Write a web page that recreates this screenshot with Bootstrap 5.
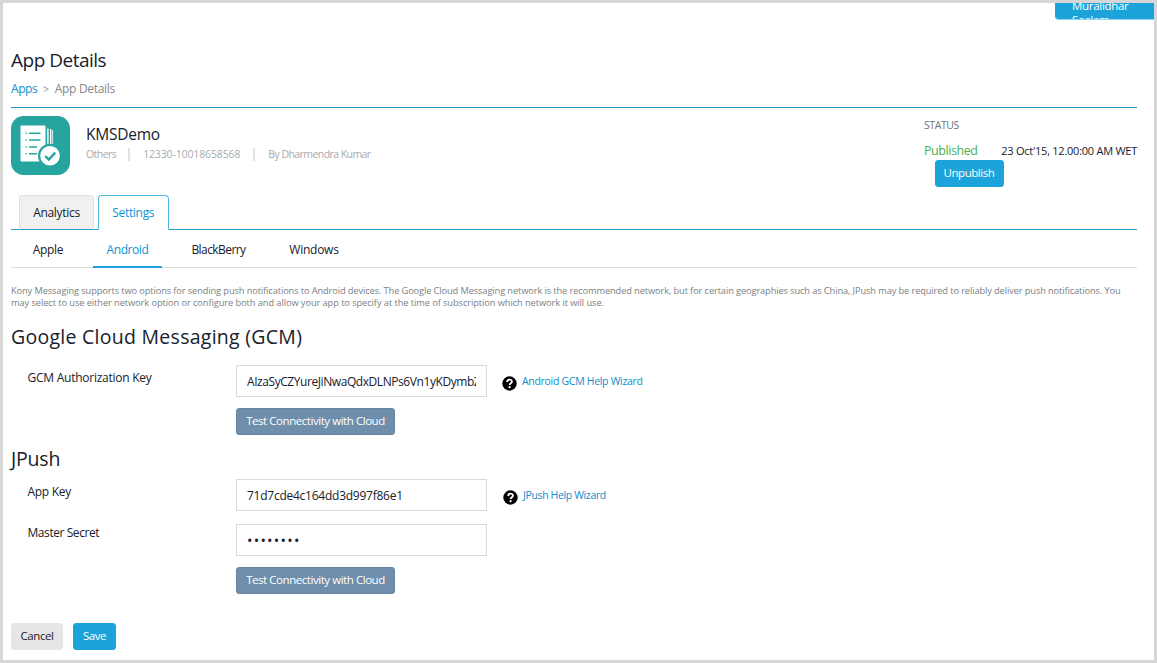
<!DOCTYPE html>
<html lang="en">
<head>
<meta charset="utf-8">
<meta name="viewport" content="width=device-width, initial-scale=1">
<title>App Details</title>
<link href="https://cdn.jsdelivr.net/npm/bootstrap@5.3.0/dist/css/bootstrap.min.css" rel="stylesheet">
<style>
  body { font: 12px/20px "Open Sans", "Noto Sans", sans-serif; color: #17212b; letter-spacing: -.3px; background: #fff; }
  a { color: #0d8ec9; text-decoration: none; }
  .page-frame { height: 663px; border: 3px solid #d6d6d6; padding: 43px 17px 0 8px; }
  .ls-1 { letter-spacing: -.13px; } .ls-2 { letter-spacing: -.25px; } .ls-4 { letter-spacing: -.43px; } .ls-5 { letter-spacing: -.57px; }
  .user-menu { width: 99px; height: 17px; padding: 0 28px 0 17px; background: #1ba3da; border-bottom: 1px solid #8fd3ee; border-bottom-left-radius: 4px; color: #fff; font-size: 11.5px; line-height: 14px; }
  .user-menu span { display: block; margin-top: -4px; }
  h1 { font-size: 19px; line-height: 29px; letter-spacing: -.5px; font-weight: 400; }
  h2 { font-size: 19.5px; line-height: 28px; letter-spacing: .27px; font-weight: 400; }
  .crumbs { height: 33px; padding-top: 4px; color: #85888b; border-bottom: 1px solid #2196bd; }
  .crumbs .sep { font-size: 10px; margin: 0 6px; }
  .app-head { height: 87px; padding-top: 8px; }
  .app-name { font-size: 15.5px; line-height: 20px; letter-spacing: -.23px; margin-top: 8px; }
  .meta { font-size: 10.5px; line-height: 20px; color: #a9abad; }
  .meta .bar { width: 2px; height: 13px; background: #dfe4e8; }
  .status { width: 213px; }
  .status .label-top { font-size: 10.5px; line-height: 18px; color: #6f7477; }
  .published { font-size: 12.5px; color: #4ab04e; }
  .date { font-size: 11px; }
  .btn { --bs-btn-font-size: 11.5px; --bs-btn-line-height: 23px; --bs-btn-padding-x: 0; --bs-btn-padding-y: 0; --bs-btn-border-radius: 3px; height: 27px; padding-bottom: 2px; display: block; letter-spacing: -.45px; }
  .btn-sky { --bs-btn-bg: #1ba3da; --bs-btn-border-color: #1ba3da; --bs-btn-color: #fff; }
  .btn-slate { --bs-btn-bg: #6f8eab; --bs-btn-border-color: #6887a5; --bs-btn-color: #fff; width: 159px; }
  .btn-grey { --bs-btn-bg: #e6e6e6; --bs-btn-border-color: #e6e6e6; --bs-btn-color: #17212b; }
  .main-tabs { height: 35px; border-bottom: 1px solid #2b9fca; padding-left: 8px; gap: 4px; }
  .main-tabs .nav-link { height: 35px; padding: 7px 0 0; margin: 0; text-align: center; color: #17212b; background: #f0f0f0; border: 1px solid #e0e0e0; border-bottom-color: #2b9fca; border-radius: 4px 4px 0 0; }
  .main-tabs .nav-link.active { color: #0d93d2; background: #fff; border-color: #4fb8df; border-bottom-color: #fff; }
  .sub-tabs { height: 38px; border-bottom: 1px solid #dedede; }
  .sub-tabs .nav-link { height: 38px; padding: 10px 0 0; color: #17212b; text-align: center; }
  .sub-tabs .nav-link.active { color: #0d93d2; border-bottom: 2px solid #1ba3da; }
  .intro { font-size: 9.25px; line-height: 12px; letter-spacing: -.103px; color: #7a7f83; padding-top: 17px; }
  .field-label { width: 225px; padding-left: 16.5px; }
  .form-control { width: 251px; height: 32px; padding: 0 10px; font-size: 12px; line-height: 20px; border: 1px solid #d3dbe2; border-radius: 0; color: #17212b; }
  .field-help { font-size: 10.5px; margin-left: 15px; height: 32px; }
  .push-btn { margin-left: 225px; }
</style>
</head>
<body>
<div class="page-frame position-relative overflow-hidden">
  <div class="user-menu position-absolute top-0 end-0 overflow-hidden"><span>Muralidhar Seelam</span></div>

  <h1 class="m-0">App Details</h1>
  <div class="crumbs d-flex"><a href="#" class="ls-4">Apps</a><span class="sep">&gt;</span><span>App Details</span></div>

  <div class="app-head d-flex">
    <svg width="59" height="59" viewBox="0 0 59 59" class="flex-shrink-0">
      <rect width="59" height="59" rx="12.5" fill="#26a5a0"/>
      <rect x="9.5" y="9.5" width="25" height="36" rx="1" fill="#fff"/>
      <path d="M36.9 12.5v19M39.7 13v15.500" stroke="#fff" stroke-width="1.4"/>
      <path d="M41.6 14v14" stroke="#fff" stroke-width=".8"/>
      <g stroke="#26a5a0" stroke-width="1.5" stroke-linecap="round"><path d="M18.500 17.200h10.500M18.500 24h10.500M18.500 31h7M18.500 37.700h7M15.200 17.200h.1M15.200 24h.1M15.200 31h.1M15.200 37.700h.1"/></g>
      <circle cx="39" cy="39.7" r="12" fill="#26a5a0"/><circle cx="39" cy="39.7" r="9.8" fill="#fff"/>
      <path d="M34.200 40l3.600 3.600 6.500-7" fill="none" stroke="#26a5a0" stroke-width="2.4"/>
    </svg>
    <div class="flex-grow-1" style="padding-left:16px">
      <div class="app-name">KMSDemo</div>
      <div class="meta d-flex align-items-center">
        <span class="ls-5">Others</span><span class="bar" style="margin:0 13px 0 12px"></span><span class="ls-1">12330-10018658568</span><span class="bar" style="margin:0 13px"></span><span class="ls-5">By Dharmendra Kumar</span>
      </div>
    </div>
    <div class="status">
      <div class="label-top ls-4">STATUS</div>
      <div class="d-flex justify-content-between" style="padding-top:7px;height:26px"><span class="published ls-4">Published</span><span class="date ls-2">23 Oct'15, 12.00:00 AM WET</span></div>
      <button class="btn btn-sky ls-5" style="width:69px;margin-left:10.5px">Unpublish</button>
    </div>
  </div>

  <nav class="nav main-tabs">
    <a class="nav-link" href="#" style="width:75px">Analytics</a>
    <a class="nav-link active" href="#" style="width:70.5px">Settings</a>
  </nav>
  <nav class="nav sub-tabs">
    <a class="nav-link" href="#" style="width:74px">Apple</a>
    <a class="nav-link active ls-4" href="#" style="width:69px;margin-left:8px">Android</a>
    <a class="nav-link ls-5" href="#" style="width:81px;margin-left:16px">BlackBerry</a>
    <a class="nav-link ls-2" href="#" style="width:76px;margin-left:17px">Windows</a>
  </nav>

  <p class="intro m-0 text-nowrap">Kony Messaging supports two options for sending push notifications to Android devices. The Google Cloud Messaging network is the recommended network, but for certain geographies such as China, JPush may be required to reliably deliver push notifications. You<br><span style="letter-spacing:-.07px">may select to use either network option or configure both and allow your app to specify at the time of subscription which network it will use.</span></p>

  <h2 class="mb-0" style="margin-top:14px">Google Cloud Messaging (GCM)</h2>
  <div class="d-flex" style="margin-top:14px">
    <label class="field-label ls-2" style="padding-top:3px">GCM Authorization Key</label>
    <input class="form-control ls-4" type="text" value="AIzaSyCZYureJiNwaQdxDLNPs6Vn1yKDymbZkq8">
    <div class="field-help d-flex align-items-center">
      <svg width="15" height="15" viewBox="0 0 15 15" style="margin:4px 5px 0 0"><circle cx="7.5" cy="7.5" r="7.2" fill="#000"/><path d="M5.200 6c0-3.200 4.800-3 4.700-.3 0 1.600-2.200 1.600-2.200 3.200" fill="none" stroke="#fff" stroke-width="1.8"/><circle cx="7.6" cy="11.2" r="1.1" fill="#fff"/></svg>
      <a href="#">Android GCM Help Wizard</a>
    </div>
  </div>
  <button class="btn btn-slate push-btn" style="margin-top:11px">Test Connectivity with Cloud</button>

  <h2 class="mb-0" style="margin-top:10px;letter-spacing:-.2px">JPush</h2>
  <div class="d-flex" style="margin-top:6px">
    <label class="field-label" style="padding-top:3px">App Key</label>
    <input class="form-control ls-2" type="text" value="71d7cde4c164dd3d997f86e1">
    <div class="field-help d-flex align-items-center">
      <svg width="15" height="15" viewBox="0 0 15 15" style="margin:4px 5px 0 1px"><circle cx="7.5" cy="7.5" r="7.2" fill="#000"/><path d="M5.200 6c0-3.200 4.800-3 4.700-.3 0 1.600-2.200 1.600-2.200 3.200" fill="none" stroke="#fff" stroke-width="1.8"/><circle cx="7.6" cy="11.2" r="1.1" fill="#fff"/></svg>
      <a href="#" style="letter-spacing:-.36px">JPush Help Wizard</a>
    </div>
  </div>
  <div class="d-flex" style="margin-top:13px">
    <label class="field-label ls-4" style="margin-top:-1px">Master Secret</label>
    <input class="form-control" type="text" value="••••••••" style="font-size:14.5px;letter-spacing:1.25px">
  </div>
  <button class="btn btn-slate push-btn" style="margin-top:11px">Test Connectivity with Cloud</button>

  <div class="d-flex" style="margin-top:29px;gap:10px">
    <button class="btn btn-grey ls-5" style="width:52px">Cancel</button>
    <button class="btn btn-sky" style="width:43px">Save</button>
  </div>
</div>
<script src="https://cdn.jsdelivr.net/npm/bootstrap@5.3.0/dist/js/bootstrap.bundle.min.js"></script>
</body>
</html>
